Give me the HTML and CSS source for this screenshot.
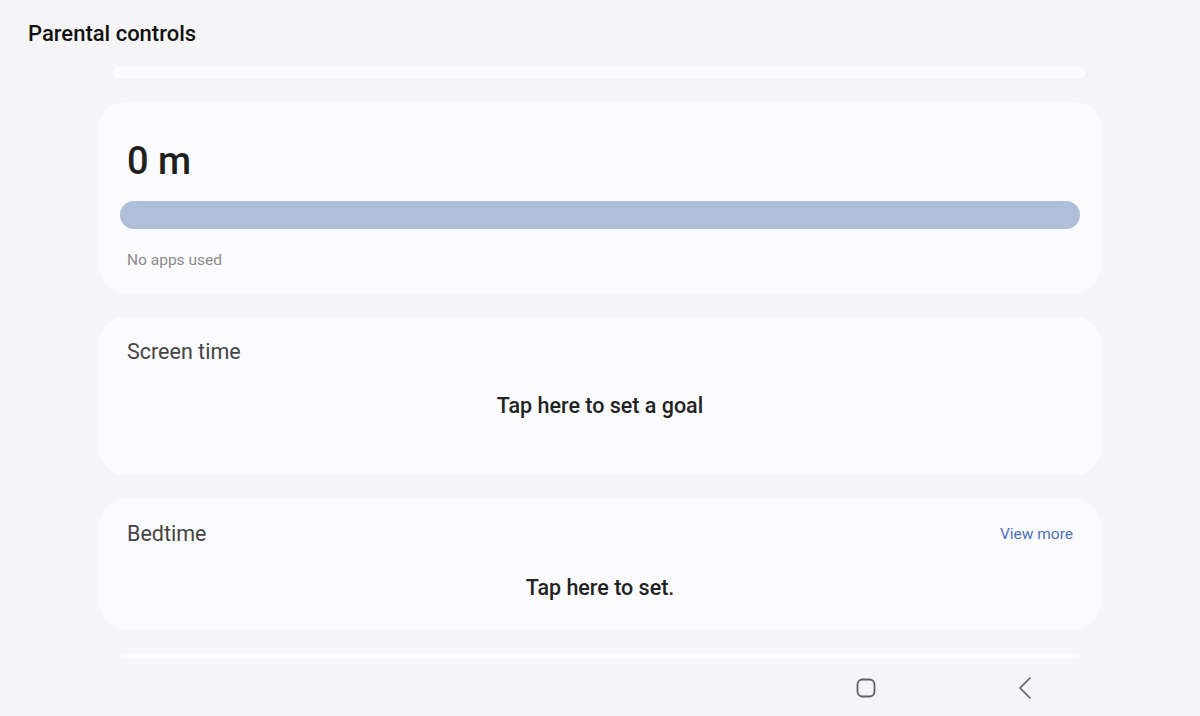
FILE: index.html
```html
<!DOCTYPE html>
<html lang="en">
  <head>
    <meta charset="utf-8" />
    <title>Parental controls</title>
    <meta name="viewport" content="width=device-width, initial-scale=1" />
    <link rel="stylesheet" href="styles.css">
  </head>

  <body>
    <div class="header">
      <h1>Parental controls</h1>
    </div>

    <div class="content">
      <div class="peek"></div>

      <div class="card usage">
        <div class="total">0 m</div>
        <div class="bar"></div>
        <div class="note">No apps used</div>
      </div>

      <div class="card goal">
        <div class="card-head">
          <span class="title">Screen time</span>
        </div>
        <div class="action">Tap here to set a goal</div>
      </div>

      <div class="card bedtime">
        <div class="card-head">
          <span class="title">Bedtime</span>
          <a class="more" href="#">View more</a>
        </div>
        <div class="action">Tap here to set.</div>
      </div>

      <div class="peek bottom"></div>
    </div>

    <div class="navbar">
      <div class="nav-btn">
        <svg width="20" height="20" viewBox="0 0 20 20">
          <rect x="1.5" y="1.5" width="17" height="17" rx="5" fill="none" stroke="#5f5f63" stroke-width="1.8" />
        </svg>
      </div>
      <div class="nav-btn">
        <svg width="20" height="24" viewBox="0 0 20 24">
          <path d="M15 2 L5 12 L15 22" fill="none" stroke="#5f5f63" stroke-width="1.6" stroke-linecap="round" stroke-linejoin="round" />
        </svg>
      </div>
    </div>
  </body>
</html>
```

FILE: styles.css
```css
/* Layout and font */

html,
body {
  font-family: Roboto, "Noto Sans", Arial, sans-serif;
  margin: 0;
  height: 100%;
  background: #f5f5f7;
  color: #222;
  overflow: hidden;
}

.header {
  height: 67px;
  padding-left: 28px;
  box-sizing: border-box;
}

.header h1 {
  margin: 0;
  padding-top: 19px;
  font-size: 22px;
  line-height: 30px;
  font-weight: 500;
  color: #111;
}

.content {
  width: 1002px;
  margin-left: 99px;
  display: flex;
  flex-direction: column;
  gap: 24px;
}

.peek {
  height: 11px;
  margin: 0 15px 0 14px;
  background: #fcfcfe;
  border-radius: 6px / 5px;
}

.peek.bottom {
  height: 6px;
  margin: 0 21px;
  border-radius: 3px;
}

/* Cards */

.card {
  background: #fbfbfd;
  border-radius: 26px;
  padding: 0 28px;
}

.usage {
  padding: 37px 21px 23px 21px;
}

.usage .total {
  padding-left: 7px;
  font-size: 38px;
  line-height: 44px;
  font-weight: 500;
  color: #1f1f1f;
}

.usage .bar {
  margin-top: 18px;
  height: 28px;
  border-radius: 14px;
  background: #b0bfd9;
}

.usage .note {
  margin-top: 21px;
  padding-left: 7px;
  font-size: 15.5px;
  line-height: 20px;
  color: #8a8a8e;
}

.goal {
  padding-top: 21px;
  padding-bottom: 55px;
}

.bedtime {
  padding-top: 21px;
  padding-bottom: 27px;
}

.card-head {
  display: flex;
  justify-content: space-between;
  align-items: center;
  height: 28px;
}

.card-head .title {
  font-size: 21.5px;
  line-height: 28px;
  color: #444;
}

.card-head .more {
  font-size: 15.5px;
  line-height: 28px;
  color: #4c72b5;
  text-decoration: none;
}

.action {
  margin-top: 26px;
  text-align: center;
  font-size: 21.5px;
  line-height: 28px;
  font-weight: 500;
  color: #232323;
}

/* Navigation bar */

.navbar {
  height: 57px;
  display: flex;
  justify-content: flex-end;
  align-items: center;
  gap: 139px;
  padding-right: 165px;
}

.nav-btn {
  display: flex;
  align-items: center;
  justify-content: center;
  width: 20px;
  height: 24px;
}
```
